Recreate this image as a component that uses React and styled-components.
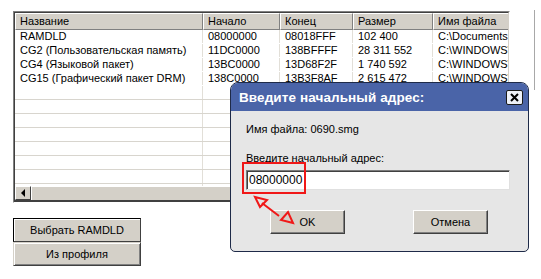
import React from 'react'
import styled, { createGlobalStyle } from 'styled-components'

const GlobalStyle = createGlobalStyle`
  body {
    margin: 0;
    background: #fff;
    font-family: "Liberation Sans", Arial, sans-serif;
  }
`

const Page = styled.div`
  position: relative;
  width: 541px;
  height: 279px;
  overflow: hidden;
  background: #fff;
`

const TopRow = styled.div`
  display: flex;
  align-items: flex-start;
`

const ListBox = styled.div`
  margin: 11px 0 0 13px;
  width: 502px;
  height: 192px;
  box-sizing: border-box;
  border: 1px solid #808080;
  border-right-color: #fff;
  border-bottom-color: #fff;
  display: flex;
  flex-direction: column;
  overflow: hidden;
`

const ListInner = styled.div`
  flex: 1;
  display: flex;
  flex-direction: column;
  border: 1px solid #404040;
  border-right-color: #d4d0c8;
  border-bottom-color: #d4d0c8;
  border-bottom-width: 2px;
  border-bottom-color: #404040;
  overflow: hidden;
  min-height: 0;
`

const COLS = '188px 77px 73px 80px 120px'

const HeaderRow = styled.div`
  display: grid;
  grid-template-columns: ${COLS};
  height: 17px;
  flex-shrink: 0;
`

const HeaderCell = styled.div`
  background: #d4d0c8;
  box-sizing: border-box;
  border-top: 1px solid #fff;
  border-left: 1px solid #fff;
  border-right: 1px solid #808080;
  border-bottom: 1px solid #808080;
  font-size: 11px;
  line-height: 15px;
  padding-left: 4px;
  color: #000;
  white-space: nowrap;
  overflow: hidden;
`

const Rows = styled.div`
  flex: 1;
  overflow: hidden;
  background: #fff;
  min-height: 0;
`

const Row = styled.div`
  display: grid;
  grid-template-columns: ${COLS};
  height: 14px;
  box-sizing: border-box;
  border-bottom: 1px solid ${p => (p.$empty ? '#d8d5ce' : '#fff')};
`

const Cell = styled.div`
  font-size: 11px;
  line-height: 13px;
  padding-left: 5px;
  border-right: 1px solid #e2dfd8;
  white-space: nowrap;
  overflow: hidden;
  color: #000;
`

const HScroll = styled.div`
  height: 14px;
  flex-shrink: 0;
  background: #e4e1da;
  display: flex;
`

const ScrollBtn = styled.div`
  width: 16px;
  box-sizing: border-box;
  background: #d4d0c8;
  border-top: 1px solid #fff;
  border-left: 1px solid #fff;
  border-right: 1px solid #404040;
  border-bottom: 1px solid #404040;
  display: flex;
  align-items: center;
  justify-content: center;
`

const Thumb = styled.div`
  flex: 1;
  background: #d4d0c8;
  box-sizing: border-box;
  border-top: 1px solid #fff;
  border-left: 1px solid #fff;
`

const Triangle = styled.div`
  width: 0;
  height: 0;
  border-top: 4px solid transparent;
  border-bottom: 4px solid transparent;
  border-right: 4px solid #000;
`

const SidePanel = styled.div`
  margin: 10px 0 0 24px;
  width: 6px;
  height: 80px;
  border-left: 1px solid #a8a8a8;
`

const ButtonColumn = styled.div`
  display: flex;
  flex-direction: column;
  width: 128px;
  margin: 15px 0 0 13px;
`

const PanelButton = styled.div`
  height: 24px;
  box-sizing: border-box;
  background: #d4d0c8;
  border: 1px solid ${p => (p.$default ? '#000' : '#d4d0c8')};
  border-right-color: #404040;
  border-bottom-color: #404040;
  box-shadow: ${p => (p.$default ? 'inset 1px 1px 0 #fff' : 'inset 1px 1px 0 #fff, inset -1px -1px 0 #808080')};
  display: flex;
  align-items: center;
  justify-content: center;
  font-size: 11px;
  color: #000;
`

const Dialog = styled.div`
  position: absolute;
  left: 230px;
  top: 82px;
  width: 299px;
  height: 170px;
  box-sizing: border-box;
  border: 1px solid #1e2a48;
  border-radius: 8px 8px 5px 5px;
  background: #e6e6e6;
  overflow: hidden;
  display: flex;
  flex-direction: column;
`

const TitleBar = styled.div`
  height: 28px;
  background: #4a64a8;
  display: flex;
  align-items: center;
  justify-content: space-between;
  padding: 0 5px 0 8px;
`

const TitleText = styled.span`
  color: #fff;
  font-weight: bold;
  font-size: 13.5px;
  letter-spacing: 0.1px;
`

const CloseBox = styled.div`
  width: 17px;
  height: 15px;
  box-sizing: border-box;
  background: #eef1f8;
  border: 1px solid #1a1a1a;
  border-radius: 2px;
  display: flex;
  align-items: center;
  justify-content: center;
`

const Body = styled.div`
  flex: 1;
  padding: 12px 0 0 15px;
  display: flex;
  flex-direction: column;
`

const Label = styled.div`
  font-size: 11px;
  line-height: 13px;
  color: #000;
  margin-bottom: ${p => p.$gap || 0}px;
`

const Input = styled.div`
  width: 264px;
  height: 20px;
  box-sizing: border-box;
  margin-top: 5px;
  background: #fff;
  border: 1px solid #7a7a7a;
  border-right-color: #e0e0e0;
  border-bottom-color: #e0e0e0;
  box-shadow: inset 1px 1px 0 #404040;
  font-size: 12px;
  line-height: 18px;
  padding-left: 2px;
  color: #000;
`

const DialogButtons = styled.div`
  display: flex;
  justify-content: space-between;
  margin: 20px 0 0 24px;
  width: 218px;
`

const DialogButton = styled.div`
  width: 75px;
  height: 24px;
  box-sizing: border-box;
  background: #d4d0c8;
  border: 1px solid #fff;
  border-right-color: #404040;
  border-bottom-color: #404040;
  box-shadow: inset -1px -1px 0 #808080;
  display: flex;
  align-items: center;
  justify-content: center;
  font-size: 11px;
  color: #000;
`

const Highlight = styled.div`
  position: absolute;
  left: 242px;
  top: 162px;
  width: 64px;
  height: 32px;
  box-sizing: border-box;
  border: 2px solid #f01818;
`

const Arrow = styled.svg`
  position: absolute;
  left: 245px;
  top: 190px;
`

const columns = ['Название', 'Начало', 'Конец', 'Размер', 'Имя файла']

const rows = [
  ['RAMDLD', '08000000', '08018FFF', '102 400', 'C:\\Documents and'],
  ['CG2 (Пользовательская память)', '11DC0000', '138BFFFF', '28 311 552', 'C:\\WINDOWS\\Temp'],
  ['CG4 (Языковой пакет)', '13BC0000', '13D68F2F', '1 740 592', 'C:\\WINDOWS\\Temp'],
  ['CG15 (Графический пакет DRM)', '138C0000', '13B3F8AF', '2 615 472', 'C:\\WINDOWS\\Temp'],
]

const EMPTY_ROWS = 8

const App = () => (
  <Page>
    <GlobalStyle />
    <TopRow>
      <ListBox>
        <ListInner>
          <HeaderRow>
            {columns.map(c => (
              <HeaderCell key={c}>{c}</HeaderCell>
            ))}
          </HeaderRow>
          <Rows>
            {rows.map(r => (
              <Row key={r[0]}>
                {r.map((v, i) => (
                  <Cell key={i}>{v}</Cell>
                ))}
              </Row>
            ))}
            {Array.from({ length: EMPTY_ROWS }).map((_, i) => (
              <Row key={'e' + i} $empty>
                {columns.map(c => (
                  <Cell key={c} />
                ))}
              </Row>
            ))}
          </Rows>
          <HScroll>
            <ScrollBtn>
              <Triangle />
            </ScrollBtn>
            <Thumb />
          </HScroll>
        </ListInner>
      </ListBox>
      <SidePanel />
    </TopRow>

    <ButtonColumn>
      <PanelButton $default>Выбрать RAMDLD</PanelButton>
      <PanelButton>Из профиля</PanelButton>
    </ButtonColumn>

    <Dialog>
      <TitleBar>
        <TitleText>Введите начальный адрес:</TitleText>
        <CloseBox>
          <svg width="11" height="11" viewBox="0 0 11 11">
            <path d="M2 2 L9 9 M9 2 L2 9" stroke="#000" strokeWidth="2" />
          </svg>
        </CloseBox>
      </TitleBar>
      <Body>
        <Label $gap={16}>Имя файла: 0690.smg</Label>
        <Label>Введите начальный адрес:</Label>
        <Input>08000000</Input>
        <DialogButtons>
          <DialogButton>OK</DialogButton>
          <DialogButton>Отмена</DialogButton>
        </DialogButtons>
      </Body>
    </Dialog>

    <Highlight />
    <Arrow width="60" height="40" viewBox="0 0 60 40">
      <line x1="17" y1="13" x2="34" y2="26" stroke="#f01818" strokeWidth="2" />
      <polygon points="10,7 22,10 15,17" fill="none" stroke="#f01818" strokeWidth="2" strokeLinejoin="miter" />
      <polygon points="48,33 36,30 43,22" fill="none" stroke="#f01818" strokeWidth="2" strokeLinejoin="miter" />
    </Arrow>
  </Page>
)

export default App
